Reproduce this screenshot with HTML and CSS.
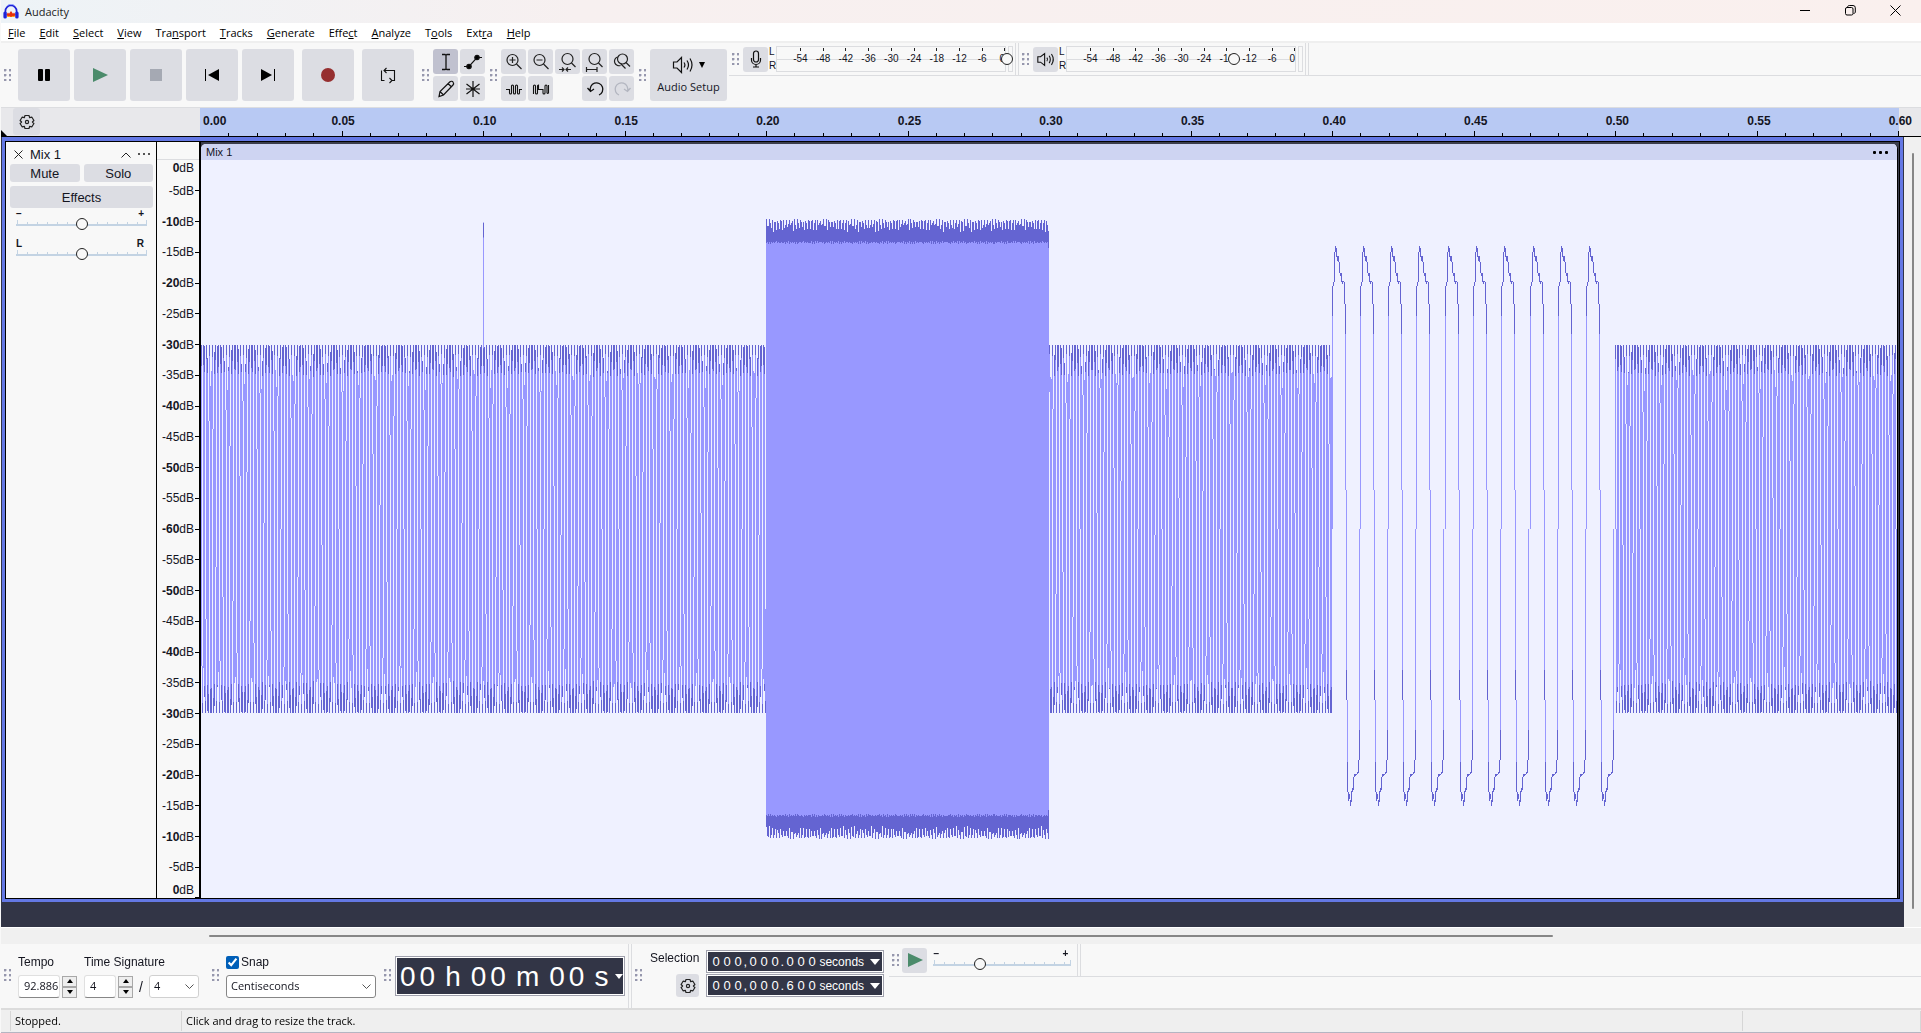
FILE: index.html
```html
<!DOCTYPE html>
<html lang="en">
<head>
    <meta charset="UTF-8">
    <title>Audacity</title>
    <link rel="stylesheet" href="styles.css">
</head>
<body>
    <header class="titlebar">
        <svg class="logo" width="16" height="16" viewBox="0 0 16 16">
            <path d="M3.4 10h9.2l-1 3H4.4z" fill="#ffb11a"/>
            <path d="M3.5 10.5l1.5-2 1 1.2L8 7l2 2.7 1-1.2 1.5 2-1.5 2-1-.8-2 1.3-2-1.3-1 .8z" fill="#e8300c"/>
            <path d="M2.4 9V7a5.6 5.6 0 0 1 11.2 0v2" fill="none" stroke="#1d22d8" stroke-width="1.7"/>
            <path d="M4 1.9a5.6 5.6 0 0 1 8 0" fill="none" stroke="#8fa0ff" stroke-width="1"/>
            <rect x="0.4" y="7.5" width="3.4" height="7" rx="1.6" fill="#1d22d8"/>
            <rect x="12.2" y="7.5" width="3.4" height="7" rx="1.6" fill="#1d22d8"/>
        </svg>
        <span class="title">Audacity</span>
        <div class="window-buttons">
            <button aria-label="Minimize"><svg width="11" height="11"><path d="M0 5.5h10" stroke="#000" /></svg></button>
            <button aria-label="Restore"><svg width="11" height="11" fill="none" stroke="#000"><rect x="0.5" y="2.5" width="7.5" height="7.5" rx="1.5"/><path d="M2.5 2.3c0-1 .7-1.8 1.8-1.8H8a2.3 2.3 0 0 1 2.3 2.3V7c0 .8-.7 1.5-1.8 1.5"/></svg></button>
            <button aria-label="Close"><svg width="11" height="11"><path d="M.5.5l10 10M10.5.5l-10 10" stroke="#000"/></svg></button>
        </div>
    </header>

    <nav class="menubar">
        <a href="#"><u>F</u>ile</a>
        <a href="#"><u>E</u>dit</a>
        <a href="#"><u>S</u>elect</a>
        <a href="#"><u>V</u>iew</a>
        <a href="#">Tra<u>n</u>sport</a>
        <a href="#"><u>T</u>racks</a>
        <a href="#"><u>G</u>enerate</a>
        <a href="#">Effe<u>c</u>t</a>
        <a href="#"><u>A</u>nalyze</a>
        <a href="#">T<u>o</u>ols</a>
        <a href="#">Ext<u>r</u>a</a>
        <a href="#"><u>H</u>elp</a>
    </nav>

    <div class="toolbar">
        <i class="grip"></i>
        <div class="transport">
            <button class="big" aria-label="Pause"><svg width="16" height="16"><rect x="2" y="2" width="5" height="12" rx="1"/><rect x="9" y="2" width="5" height="12" rx="1"/></svg></button>
            <button class="big" aria-label="Play"><svg width="16" height="16"><path d="M1 1l15 7-15 7z" fill="#4b8b6b"/></svg></button>
            <button class="big" aria-label="Stop"><svg width="16" height="16"><rect x="2" y="2" width="12" height="12" fill="#a5a9b3"/></svg></button>
            <button class="big" aria-label="Skip to Start"><svg width="16" height="16"><path d="M1.5 2v12" stroke="#000"/><path d="M15 2v12L4 8z"/></svg></button>
            <button class="big" aria-label="Skip to End"><svg width="16" height="16"><path d="M14.5 2v12" stroke="#000"/><path d="M1 2v12l11-6z"/></svg></button>
            <button class="big spaced" aria-label="Record"><svg width="16" height="16"><circle cx="8" cy="8" r="7" fill="#962f30"/></svg></button>
            <button class="big spaced" aria-label="Loop"><svg width="16" height="18" viewBox="0 0 16 18" fill="none" stroke="#111" stroke-width="1.1"><path d="M4.5 14.5h-3v-10M4 4.5h10.5v10h-3M6.5 2L4 4.5 6.5 7M9.5 12l2.5 2.5L9.5 17"/></svg></button>
        </div>
        <i class="grip"></i>
        <div class="tools">
            <button class="tool selected" aria-label="Selection Tool"><svg width="20" height="20" fill="none" stroke="#111" stroke-width="1.3"><path d="M6 2.5h3l1 .8 1-.8h3M6 17.5h3l1-.8 1 .8h3M10 3v14"/></svg></button>
            <button class="tool" aria-label="Envelope Tool"><svg width="20" height="20" stroke="#111" stroke-width="1.2"><path d="M1 14.5h5l8-9h5" fill="none"/><circle cx="6" cy="14.5" r="2.2"/><circle cx="14" cy="5.5" r="2.2"/></svg></button>
            <button class="tool" aria-label="Draw Tool"><svg width="20" height="20" fill="none" stroke="#111" stroke-width="1.2"><path d="M3 17.5l1-5L14 2.8c1-1 2.500-.5 3 .2s1 2 0 3L7.500 16zM4 12.500L7.500 16M12 4.500L15.500 8"/></svg></button>
            <button class="tool" aria-label="Multi-Tool"><svg width="20" height="20" fill="none" stroke="#111" stroke-width="1.2"><path d="M10 2v16M3.5 5l13 10M16.5 5l-13 10M3 10h14"/></svg></button>
        </div>
        <i class="grip"></i>
        <div class="zooms">
            <button class="tool" aria-label="Zoom In"><svg width="20" height="20" fill="none" stroke="#222" stroke-width="1.2"><circle cx="8.5" cy="8" r="5.5"/><path d="M12.5 12l5 5M5.5 8h6M8.5 5v6"/></svg></button>
            <button class="tool" aria-label="Zoom Out"><svg width="20" height="20" fill="none" stroke="#222" stroke-width="1.2"><circle cx="8.5" cy="8" r="5.5"/><path d="M12.5 12l5 5M5.5 8h6"/></svg></button>
            <button class="tool" aria-label="Fit Selection"><svg width="20" height="20" fill="none" stroke="#222" stroke-width="1.2"><circle cx="9.5" cy="7" r="5.5"/><path d="M13.5 11l4 4M1 17.5h5M4 15.5l2 2-2 2M13 17.5H8M10 15.500l-2 2 2 2"/></svg></button>
            <button class="tool" aria-label="Fit Project"><svg width="20" height="20" fill="none" stroke="#222" stroke-width="1.2"><circle cx="9.5" cy="7" r="5.5"/><path d="M13.5 11l4 4M1.500 15v5M12 15v5M2 17.500h10"/></svg></button>
            <button class="tool" aria-label="Zoom Toggle"><svg width="20" height="20" fill="none" stroke="#222" stroke-width="1.2"><circle cx="10.5" cy="7" r="5"/><path d="M14 10.500l4 4M5.500 5a4.500 4.500 0 1 0 3 8.500M9 12l4.500 4.500"/></svg></button>
            <button class="tool" aria-label="Trim"><svg width="20" height="20" fill="none" stroke="#111" stroke-width="1.1"><path d="M2 10.5h3.5V14a1 1 0 0 0 2 0V7a1 1 0 0 1 2 0v7a1 1 0 0 0 2 0V7a1 1 0 0 1 2 0v7a1 1 0 0 0 2 0v-3.500H18"/></svg></button>
            <button class="tool" aria-label="Silence"><svg width="20" height="20" fill="none" stroke="#111" stroke-width="1.1"><path d="M2.500 15V7a1 1 0 0 1 2 0v7a1 1 0 0 0 2 0V7a1 1 0 0 1 1-1v4.500h4.500V14a1 1 0 0 0 2 0V7a1 1 0 0 1 2 0v7a1 1 0 0 0 1.500 0V6"/></svg></button>
            <span></span>
            <button class="tool" aria-label="Undo"><svg width="20" height="20" fill="none" stroke="#111" stroke-width="1.3"><path d="M5.500 12A6.300 6.300 0 1 1 14 16M2.500 9l3 3.500L9 10"/></svg></button>
            <button class="tool" aria-label="Redo" disabled><svg width="20" height="20" fill="none" stroke="#b3b6c0" stroke-width="1.3"><path d="M15.5 12A6.300 6.300 0 1 0 7 16M18.500 9l-3 3.500L12 10"/></svg></button>
        </div>
        <i class="grip"></i>
        <button class="audio-setup">
            <span class="audio-icons">
                <svg width="22" height="18" fill="none" stroke="#111" stroke-width="1.2"><path d="M1.5 6h3.500l4.500-4.500v15L5 12H1.500zM12 6.500q1.800 2.500 0 5M15 4.500q3 4.500 0 9M18 2.500q4 6.500 0 13"/></svg>
                <svg width="6" height="6"><path d="M0 0h6L3 6z"/></svg>
            </span>
            Audio Setup
        </button>
        <div class="meters">
            <div class="meter-dock">
                <i class="grip"></i>
                <button class="tool" aria-label="Record Meter"><svg width="20" height="20" fill="none" stroke="#111" stroke-width="1.2"><rect x="7.5" y="2" width="5" height="11" rx="2.5"/><path d="M5.5 9v2a4.500 4.500 0 0 0 9 0V9M10 15.500V18M7 18h6"/></svg></button>
                <div class="channels"><span>L</span><span>R</span></div>
                <div class="meter">
                    <div class="scale"><span>-54</span><span>-48</span><span>-42</span><span>-36</span><span>-30</span><span>-24</span><span>-18</span><span>-12</span><span>-6</span><span>0</span></div>
                    <div class="peak"></div>
                    <input type="range" value="100" aria-label="Recording level">
                </div>
            </div>
            <div class="meter-dock">
                <i class="grip"></i>
                <button class="tool" aria-label="Playback Meter"><svg width="20" height="20" viewBox="0 0 22 20" fill="none" stroke="#111" stroke-width="1.2"><path d="M2 7.500h3L9.500 4v13L5 13.500H2zM12 8.500q1.500 2 0 4M14.500 6.500q2.500 4 0 8M17 4.500q4 6 0 12"/></svg></button>
                <div class="channels"><span>L</span><span>R</span></div>
                <div class="meter">
                    <div class="scale"><span>-54</span><span>-48</span><span>-42</span><span>-36</span><span>-30</span><span>-24</span><span>-18</span><span>-12</span><span>-6</span><span>0</span></div>
                    <div class="peak"></div>
                    <input type="range" value="72" aria-label="Playback level">
                </div>
            </div>
        </div>
    </div>

    <div class="timeline">
        <div class="timeline-left">
            <button class="gear" aria-label="Timeline Options"><svg width="16" height="16" fill="none" stroke="#222" stroke-width="1.2"><path d="M6 1.500h4l.7 2.200 2.200-.5 2 3.300L13.400 8l1.500 1.500-2 3.300-2.200-.5-.7 2.200H6l-.7-2.200-2.200.5-2-3.300L2.600 8 1.100 6.500l2-3.300 2.200.5z" stroke-linejoin="round"/><circle cx="8" cy="8" r="1.6"/></svg></button>
            <svg class="corner" width="6" height="6"><path d="M0 0l6 6H0z"/></svg>
        </div>
        <div class="ruler">
            <div class="times">
                <span>0.00</span><span>0.05</span><span>0.10</span><span>0.15</span><span>0.20</span><span>0.25</span><span>0.30</span><span>0.35</span><span>0.40</span><span>0.45</span><span>0.50</span><span>0.55</span><span>0.60</span>
            </div>
            <canvas id="ticks"></canvas>
        </div>
    </div>

    <main class="workspace">
        <div class="tracks">
            <section class="track">
                <div class="panel">
                    <div class="panel-head">
                        <button aria-label="Close track"><svg width="9" height="9"><path d="M.5.5l8 8M8.500.5l-8 8" stroke="#222"/></svg></button>
                        <span class="name">Mix 1</span>
                        <button aria-label="Collapse"><svg width="10" height="6" fill="none" stroke="#222"><path d="M.5 5.500L5 1l4.500 4.500"/></svg></button>
                        <button aria-label="Track menu"><svg width="13" height="3" fill="#555"><rect x="0" width="2" height="2"/><rect x="5" width="2" height="2"/><rect x="10" width="2" height="2"/></svg></button>
                    </div>
                    <div class="pair">
                        <button>Mute</button>
                        <button>Solo</button>
                    </div>
                    <button class="effects">Effects</button>
                    <div class="slider">
                        <div class="ends"><span>−</span><span>+</span></div>
                        <input type="range" value="50" aria-label="Gain">
                    </div>
                    <div class="slider">
                        <div class="ends"><span>L</span><span>R</span></div>
                        <input type="range" value="50" aria-label="Pan">
                    </div>
                </div>
                <div class="db-ruler">
                    <div class="db-top"></div>
                    <div class="db-scale" id="db-scale"></div>
                </div>
                <div class="clip-area">
                    <div class="clip">
                        <div class="clip-head">
                            <span>Mix 1</span>
                            <button aria-label="Clip menu"><svg width="16" height="3"><rect x="0" width="3" height="3" rx="1"/><rect x="6" width="3" height="3" rx="1"/><rect x="12" width="3" height="3" rx="1"/></svg></button>
                        </div>
                        <canvas id="wave"></canvas>
                    </div>
                </div>
            </section>
        </div>
        <div class="vscroll"><div class="vthumb"></div></div>
    </main>
    <div class="hscroll"><div class="hthumb"></div></div>

    <div class="bottombar">
        <i class="grip"></i>
        <div class="field tempo">
            <label for="tempo">Tempo</label>
            <div class="row">
                <input id="tempo" type="text" value="92.886">
                <div class="spin"><button aria-label="Tempo up"><svg width="6" height="4"><path d="M0 4h6L3 0z"/></svg></button><button aria-label="Tempo down"><svg width="6" height="4"><path d="M0 0h6L3 4z"/></svg></button></div>
            </div>
        </div>
        <div class="field signature">
            <label for="upper">Time Signature</label>
            <div class="row">
                <input id="upper" type="text" value="4">
                <div class="spin"><button aria-label="Beats up"><svg width="6" height="4"><path d="M0 4h6L3 0z"/></svg></button><button aria-label="Beats down"><svg width="6" height="4"><path d="M0 0h6L3 4z"/></svg></button></div>
                <span class="slash">/</span>
                <select class="lower" aria-label="Lower time signature"><option>4</option></select>
            </div>
        </div>
        <i class="grip"></i>
        <div class="field snap">
            <label><input type="checkbox" checked>Snap</label>
            <select aria-label="Snap to"><option>Centiseconds</option></select>
        </div>
        <i class="grip"></i>
        <div class="clock">
            <div class="digits"><span>0</span><span>0</span><em>h</em><span>0</span><span>0</span><em>m</em><span>0</span><span>0</span><em>s</em></div>
            <button aria-label="Time format"><svg width="8" height="5"><path d="M0 0h8L4 5z" fill="#fff"/></svg></button>
        </div>
        <div class="divider"></div>
        <i class="grip"></i>
        <div class="selection">
            <div class="selection-left">
                <span>Selection</span>
                <button class="gear small" aria-label="Selection options"><svg width="16" height="16" fill="none" stroke="#222" stroke-width="1.2"><path d="M6 1.500h4l.7 2.200 2.200-.5 2 3.300L13.400 8l1.500 1.500-2 3.300-2.200-.5-.7 2.200H6l-.7-2.200-2.200.5-2-3.300L2.600 8 1.100 6.500l2-3.300 2.200.5z" stroke-linejoin="round"/><circle cx="8" cy="8" r="1.6"/></svg></button>
            </div>
            <div class="selection-times">
                <div class="numbers">
                    <span>0</span><span>0</span><span>0</span><i>,</i><span>0</span><span>0</span><span>0</span><i>.</i><span>0</span><span>0</span><span>0</span><b>seconds</b>
                    <button aria-label="Start format"><svg width="10" height="6"><path d="M0 0h10L5 6z" fill="#fff"/></svg></button>
                </div>
                <div class="numbers">
                    <span>0</span><span>0</span><span>0</span><i>,</i><span>0</span><span>0</span><span>0</span><i>.</i><span>6</span><span>0</span><span>0</span><b>seconds</b>
                    <button aria-label="End format"><svg width="10" height="6"><path d="M0 0h10L5 6z" fill="#fff"/></svg></button>
                </div>
            </div>
        </div>
        <div class="speed-row">
            <div class="speed">
                <i class="grip"></i>
                <button class="tool" aria-label="Play at speed"><svg width="16" height="16"><path d="M1 1l15 7-15 7z" fill="#4b8b6b"/></svg></button>
                <div class="slider">
                    <div class="ends"><span>−</span><span>+</span></div>
                    <input type="range" value="32" aria-label="Playback speed">
                </div>
                <div class="divider"></div>
            </div>
        </div>
    </div>

    <footer class="statusbar">
        <span class="state">Stopped.</span>
        <span class="hint">Click and drag to resize the track.</span>
        <span class="rate"></span>
    </footer>

    <script src="script.js"></script>
</body>
</html>
```
FILE: styles.css
```css
* {
    box-sizing: border-box;
}
body {
    margin: 0;
    min-height: 100vh;
    padding-left: 1px;
    display: flex;
    flex-direction: column;
    background-color: #f8f8f8;
    color: #14151f;
    font-family: "Liberation Sans", Arial, sans-serif;
    font-size: 12px;
}
button {
    border: 0;
    padding: 0;
    margin: 0;
    display: flex;
    align-items: center;
    justify-content: center;
    background: none;
    color: inherit;
    font: inherit;
}
input, select {
    margin: 0;
    font: inherit;
    color: inherit;
}
svg {
    display: block;
    flex: none;
}

.titlebar {
    height: 23px;
    padding: 0 20px 0 2px;
    display: flex;
    align-items: center;
    gap: 6px;
    background: linear-gradient(to right, #edf3f7, #f7f0f0 30%, #faf0ee);
    font: 11px "Open Sans", sans-serif;
}
.title {
    flex: 1;
    color: #222;
}
.window-buttons {
    display: flex;
    gap: 34px;
    padding-bottom: 2px;
}
.menubar {
    height: 20px;
    padding-left: 7px;
    display: flex;
    align-items: center;
    gap: 14px;
    background-color: #fff;
    border-bottom: 2px solid #efefef;
    font: 11px "Open Sans", sans-serif;
}
.menubar a {
    color: #000;
    text-decoration: none;
}

/* toolbars */
.toolbar {
    height: 65px;
    display: flex;
    align-items: center;
    border-bottom: 1px solid #dcdde0;
}
.grip {
    flex: none;
    width: 7px;
    height: 12px;
    margin: 0 4px 0 3px;
    background: radial-gradient(circle at 1px 1px, #9697ad 1px, transparent 2px) 0 0 / 5px 5px;
}
.transport {
    display: flex;
    gap: 4px;
    margin: 0 5px 0 3px;
}
.big {
    width: 52px;
    height: 52px;
    border-radius: 3px;
    background-color: #dcdde3;
}
.spaced {
    margin-left: 4px;
}
.tools, .zooms {
    display: grid;
    grid-template-columns: 25px 25px;
    gap: 2px;
    margin-right: 2px;
}
.zooms {
    grid-template-columns: repeat(5, 25px);
}
.tool {
    flex: none;
    width: 25px;
    height: 25px;
    border-radius: 3px;
    background-color: #dcdde3;
}
.tool.selected {
    background-color: #c0c1cf;
}
.audio-setup {
    width: 77px;
    height: 52px;
    flex-direction: column;
    gap: 5px;
    border-radius: 3px;
    background-color: #dcdde3;
    font: 11px "Open Sans", sans-serif;
}
.audio-icons {
    display: flex;
    align-items: center;
    gap: 5px;
}
.meters {
    flex: 1;
    align-self: flex-start;
    height: 33px;
    margin-left: 2px;
    display: flex;
    border-bottom: 1px solid #dcdde0;
}
.meter-dock {
    display: flex;
    align-items: center;
    padding-right: 2px;
    border-right: 1px solid #dcdde0;
    margin-right: 3px;
    box-shadow: 2px 0 0 #f8f8f8, 3px 0 0 #dcdde0;
}
.channels {
    width: 8px;
    padding-left: 1px;
    display: flex;
    flex-direction: column;
    font-size: 10px;
    line-height: 14px;
}
.meter {
    position: relative;
    display: flex;
    gap: 2px;
    height: 26px;
}
.scale {
    width: 230px;
    padding-left: 12px;
    display: flex;
    border: 1px solid #dcdde0;
    font-size: 10px;
    line-height: 24px;
    background: linear-gradient(#dcdde0, #dcdde0) 0 12px / 100% 1px no-repeat;
}
.scale span {
    flex: 2;
    text-align: center;
    background: linear-gradient(#222, #222) 50% 1px / 1px 3px no-repeat;
}
.scale span:last-child {
    flex: 1;
    text-align: right;
    background-position: 100% 1px;
}
.peak {
    width: 5px;
    border: 1px solid #dcdde0;
}
input[type=range] {
    appearance: none;
    display: block;
    width: 100%;
    background: none;
}
input[type=range]::-webkit-slider-thumb {
    appearance: none;
    width: 12px;
    height: 12px;
    border: 1px solid #222;
    border-radius: 50%;
    background-color: #f8f8f8;
}
.meter input {
    position: absolute;
    top: 0;
    left: 0;
    height: 26px;
}

/* timeline */
.timeline {
    height: 29px;
    padding-right: 22px;
    display: flex;
    background-color: #e8e8eb;
    border-bottom: 1px solid #000;
}
.timeline-left {
    position: relative;
    width: 199px;
    padding-left: 12px;
}
.gear {
    width: 27px;
    height: 27px;
    border-radius: 3px;
    background-color: #dcdde3;
}
.corner {
    position: absolute;
    left: 0;
    bottom: 0;
}
.ruler {
    flex: 1;
    min-width: 0;
    background-color: #b8c9f3;
}
.times {
    display: grid;
    grid-template-columns: minmax(0, 1fr) repeat(11, minmax(0, 2fr)) minmax(0, 1fr);
    font-weight: bold;
    line-height: 26px;
    height: 22px;
}
.times span {
    text-align: center;
    padding-left: 3px;
}
.times span:first-child {
    text-align: left;
}
.times span:last-child {
    text-align: right;
    margin-right: -13px;
}
#ticks {
    display: block;
    width: 100%;
    height: 6px;
}

/* tracks */
.workspace {
    flex: 1;
    display: flex;
    background-color: #f0f0f0;
}
.tracks {
    flex: 1;
    min-width: 0;
    display: flex;
    padding: 0 1px 25px;
    background-color: #323546;
}
.track {
    flex: 1;
    min-width: 0;
    display: flex;
    border: 3px solid #6478e4;
    border-top-width: 4px;
    box-shadow: inset 0 0 0 1px #000;
    padding: 1px;
}
.panel {
    width: 151px;
    padding: 5px 3px 0 4px;
    background-color: #f8f8f8;
    border-right: 1px solid #000;
    font-size: 13px;
}
.panel-head {
    display: flex;
    align-items: center;
    height: 15px;
    gap: 7px;
    padding: 0 2px 0 4px;
}
.name {
    flex: 1;
}
.pair {
    display: flex;
    gap: 4px;
    margin: 2px 0 4px;
}
.pair button, .effects {
    flex: 1;
    height: 18px;
    border-radius: 3px;
    background-color: #dcdde3;
}
.effects {
    width: 100%;
    height: 22px;
}
.slider {
    height: 30px;
    padding: 0 6px;
}
.ends {
    display: flex;
    justify-content: space-between;
    height: 10px;
    padding-right: 3px;
    font-size: 10px;
    line-height: 12px;
    font-weight: bold;
}
.slider input {
    height: 12px;
    background:
        linear-gradient(#c3d3e3, #c3d3e3) 0 6px / 100% 2px no-repeat,
        linear-gradient(#c3d3e3, #c3d3e3) 1px 2px / 1px 4px no-repeat,
        linear-gradient(#c3d3e3, #c3d3e3) 100% 2px / 1px 4px no-repeat,
        repeating-linear-gradient(to right, transparent 0 1px, #c3d3e3 1px 2px, transparent 2px 10px) 0 4px / 100% 2px no-repeat;
}
.db-ruler {
    width: 44px;
    display: flex;
    flex-direction: column;
    background-color: #f8f8f8;
    border-right: 2px solid #000;
}
.db-top {
    height: 18px;
    border-bottom: 1px solid #dcdde0;
}
.db-scale {
    flex: 1;
    display: flex;
    flex-direction: column;
}
.db-scale div {
    flex: 2 2 0;
    display: flex;
    align-items: center;
    justify-content: flex-end;
    gap: 1px;
}
.db-scale div::after {
    content: "";
    width: 4px;
    height: 1px;
    background-color: #000;
}
.db-scale div:first-child, .db-scale div:last-child {
    flex: 1 1 0;
}
.db-scale div:first-child::after {
    visibility: hidden;
}
.db-scale div:last-child::after {
    align-self: flex-end;
}
.clip-area {
    flex: 1;
    min-width: 0;
    display: flex;
    padding: 2px 1px 0 0;
    background-color: #3b3d4c;
}
.clip {
    flex: 1;
    min-width: 0;
    display: flex;
    flex-direction: column;
    background-color: #eff1ff;
    border-right: 1px solid #000;
    border-radius: 5px 5px 0 0;
    overflow: hidden;
}
.clip-head {
    display: flex;
    align-items: center;
    justify-content: space-between;
    height: 16px;
    padding: 0 8px 0 5px;
    background-color: #ced4f2;
    font-size: 11px;
}
#wave {
    flex: 1;
    width: 100%;
    min-height: 0;
    height: 0;
    display: block;
}
.vscroll {
    width: 17px;
    padding: 16px 7px 18px 8px;
    display: flex;
}
.vthumb {
    flex: 1;
    border-radius: 1px;
    background-color: #868686;
}
.hscroll {
    height: 17px;
    padding: 7px 368px 7px 208px;
    border-top: 1px solid #fff;
    background-color: #f0f0f0;
}
.hthumb {
    height: 2px;
    border-radius: 1px;
    background-color: #868686;
}

/* bottom toolbars */
.bottombar {
    height: 64px;
    display: flex;
}
.bottombar > .grip {
    margin-top: 25px;
}
.field {
    display: flex;
    flex-direction: column;
    padding-top: 10px;
    gap: 5px;
}
.field label {
    display: flex;
    align-items: center;
    height: 16px;
    gap: 2px;
}
.row {
    display: flex;
    align-items: center;
    gap: 2px;
}
.tempo {
    margin: 0 7px 0 3px;
}
.signature {
    margin-right: 10px;
}
.field input[type=text], .field select {
    height: 23px;
    border: 1px solid #e0e0e0;
    border-bottom-color: #868686;
    border-radius: 3px;
    background-color: #fff;
    padding: 0 3px 2px 5px;
    font: 11px "Open Sans", sans-serif;
}
#tempo {
    width: 42px;
    padding-right: 0;
}
#upper {
    width: 32px;
}
.spin {
    display: flex;
    flex-direction: column;
}
.spin button {
    width: 15px;
    height: 11px;
    border: 1px solid #a8a8a8;
    background-color: #eee;
}
.slash {
    width: 12px;
    text-align: center;
    font-size: 14px;
}
.field select {
    appearance: none;
    border-color: #b5b5b5;
    padding-left: 4px;
    background-image: url("data:image/svg+xml,%3Csvg xmlns='http://www.w3.org/2000/svg' width='9' height='6'%3E%3Cpath d='M.5.5l4 4 4-4' fill='none' stroke='%23555'/%3E%3C/svg%3E");
    background-repeat: no-repeat;
    background-position: right 4px center;
}
.field .lower {
    width: 50px;
    border-color: #d0d0d0;
}
.snap {
    margin-right: 5px;
    padding-left: 3px;
}
.field.snap select {
    width: 150px;
    border-color: #868686;
}
.snap input {
    width: 13px;
    height: 13px;
    accent-color: #005fb8;
}
.clock {
    height: 40px;
    margin: 12px 3px 0 0;
    width: 230px;
    padding-left: 4px;
    display: flex;
    align-items: center;
    justify-content: space-between;
    border: 1px solid #a0a1ad;
    outline: 1px solid #fff;
    outline-offset: -2px;
    background-color: #323546;
    color: #fff;
}
.digits {
    display: flex;
    gap: 4px;
    padding-top: 2px;
    font-size: 28px;
    line-height: 36px;
}
.digits em {
    font-style: normal;
    padding: 0 6px;
}
.digits em:last-child {
    padding-right: 0;
}
.clock button {
    width: 11px;
    height: 100%;
}
.divider {
    width: 4px;
    border: solid #dcdde0;
    border-width: 0 1px;
}
.selection {
    display: flex;
    gap: 7px;
    padding-top: 6px;
    margin-left: 4px;
    margin-right: 5px;
}
.selection-left {
    display: flex;
    flex-direction: column;
    align-items: flex-end;
    gap: 8px;
    line-height: 16px;
}
.gear.small {
    width: 23px;
    height: 23px;
}
.selection-times {
    display: flex;
    flex-direction: column;
    gap: 1px;
}
.numbers {
    width: 178px;
    height: 23px;
    padding: 0 3px 0 5px;
    display: flex;
    align-items: center;
    border: 1px solid #a0a1ad;
    outline: 1px solid #fff;
    outline-offset: -2px;
    background-color: #323546;
    color: #fff;
    font-size: 13px;
}
.numbers span {
    width: 11px;
}
.numbers i {
    width: 4px;
    font-style: normal;
    text-indent: -2px;
}
.numbers b {
    flex: 1;
    font-weight: normal;
    font-size: 12px;
}
.speed-row {
    flex: 1;
    height: 33px;
    border-bottom: 1px solid #dcdde0;
    display: flex;
}
.speed {
    display: flex;
    align-items: center;
}
.speed .grip {
    margin: 0 3px;
}
.speed .slider {
    width: 150px;
    height: 26px;
    padding: 1px 6px;
}
.speed .divider {
    align-self: stretch;
}

.statusbar {
    height: 25px;
    padding-left: 9px;
    display: flex;
    align-items: center;
    background-color: #efefef;
    border-top: 2px solid #dcdcdc;
    border-bottom: 1px solid #b4b5c2;
    font: 11px "Open Sans", sans-serif;
    color: #000;
}
.statusbar span {
    height: 20px;
    line-height: 20px;
    padding-left: 4px;
    border-left: 1px solid #d6d6d6;
}
.state {
    width: 171px;
}
.hint {
    flex: 1;
}
.rate {
    width: 179px;
    border-right: 1px solid #d6d6d6;
}
```
FILE: script.js
```js
const DURATION = 0.6;
const RATE = 44100;
const DB_RANGE = 60;
const PEAK = "#6464d2";
const RMS = "#9898ff";

// dB ruler: 0 down to -60 and back up to 0
const dbScale = document.getElementById("db-scale");
for (let i = 0; i <= 24; i++) {
    const db = i <= 12 ? i * 5 : (24 - i) * 5;
    const text = db === 0 ? "0" : "-" + db;
    const row = document.createElement("div");
    row.innerHTML = db % 10 === 0 ? `<span><b>${text}</b>dB</span>` : `<span>${text}dB</span>`;
    dbScale.appendChild(row);
}

function fitCanvas(id) {
    const canvas = document.getElementById(id);
    canvas.width = canvas.clientWidth;
    canvas.height = canvas.clientHeight;
    return canvas;
}

function drawTicks() {
    const canvas = fitCanvas("ticks");
    const ctx = canvas.getContext("2d");
    for (let i = 1; i <= 60; i++) {
        const x = Math.round(i * (canvas.width - 1) / 60);
        const h = i % 5 === 0 ? 5 : 3;
        ctx.fillRect(x, canvas.height - h, 1, h);
    }
}

function sample(n) {
    const t = n / RATE;
    const tone = 0.0316 * Math.sin(2 * Math.PI * 1000 * t);
    if (t >= 0.2 && t < 0.3) return tone + 0.3 * Math.sin(2 * Math.PI * 10000 * t);
    return tone;
}

// columns of one cycle of the 100 Hz square: offset, top and bottom as a share of the height
const CYCLE = [
    [126, 369], [122, 126], [92, 122], [86, 92], [88, 97], [96, 101], [96, 102], [102, 113],
    [113, 116], [113, 122], [121, 124], [121, 122], [122, 144], [144, 330], [330, 540],
    [540, 632], [632, 641], [634, 639], [640, 646], [631, 642], [628, 632], [617, 630],
    [614, 617], [614, 616], [614, 615], [612, 614], [600, 613], [369, 600]
].map(([a, b]) => [a / 738, b / 738]);

function drawWave() {
    const canvas = fitCanvas("wave");
    const ctx = canvas.getContext("2d");
    const w = canvas.width;
    const h = canvas.height;
    const mid = h / 2;
    const pps = (w + 1) / DURATION;
    const toY = a => {
        const v = a === 0 ? 0 : Math.max(0, 1 + 20 * Math.log10(Math.abs(a)) / DB_RANGE);
        return Math.round(mid - Math.sign(a) * v * mid);
    };

    let prevTop = mid, prevBottom = mid;
    for (let x = 0; x < w; x++) {
        const t = (x + 0.7) / pps;
        if (t >= 0.4 && t < 0.5) continue;
        const start = Math.floor(t * RATE);
        const end = Math.max(start + 1, Math.floor((x + 1.7) / pps * RATE));
        let min = 1, max = -1, sum = 0;
        for (let n = start; n < end; n++) {
            const s = sample(n);
            min = Math.min(min, s);
            max = Math.max(max, s);
            sum += s * s;
        }
        const rms = Math.sqrt(sum / (end - start));
        let top = toY(max), bottom = toY(min);
        // keep neighbouring columns joined
        if (top > prevBottom) top = prevBottom;
        if (bottom < prevTop) bottom = prevTop;
        prevTop = toY(max);
        prevBottom = toY(min);
        ctx.fillStyle = PEAK;
        ctx.fillRect(x, top, 1, Math.max(1, bottom - top));
        const rTop = Math.max(toY(rms), top), rBottom = Math.min(toY(-rms), bottom);
        ctx.fillStyle = RMS;
        if (rBottom > rTop) ctx.fillRect(x, rTop, 1, rBottom - rTop);
    }

    // single click at 0.1 s
    ctx.fillStyle = RMS;
    ctx.fillRect(Math.round(0.1 * pps - 1), h * 0.085, 1, h * 0.17);
    ctx.fillStyle = PEAK;
    ctx.fillRect(Math.round(0.1 * pps - 1), h * 0.085, 1, h * 0.02);

    for (let c = 0; c < 10; c++) {
        const x0 = Math.round((0.4 + c * 0.01) * pps - 0.7);
        CYCLE.forEach(([a, b], i) => {
            const x = x0 + Math.round(i * pps / 100 / 28);
            const y = Math.round(a * h), len = Math.max(1, Math.round((b - a) * h));
            ctx.fillStyle = PEAK;
            ctx.fillRect(x, y, 1, len);
            if (len > 60) {
                ctx.fillStyle = RMS;
                ctx.fillRect(x, i < 14 ? y + 30 : y, 1, len - 30);
            }
        });
    }
}

function draw() {
    drawTicks();
    drawWave();
}
draw();
window.addEventListener("resize", draw);
```
